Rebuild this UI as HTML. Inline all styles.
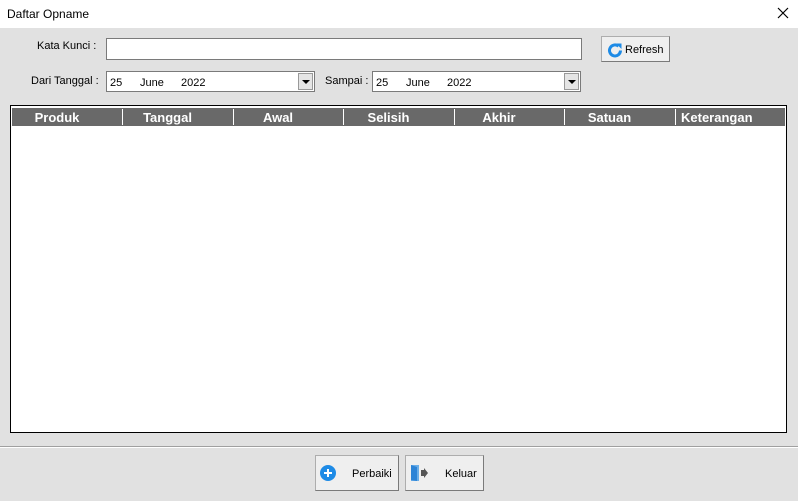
<!DOCTYPE html><html><head><style>
body{margin:0;width:798px;height:501px;background:#e1e1e1;font-family:"Liberation Sans",sans-serif;font-size:11px;position:relative;overflow:hidden}
.a{position:absolute}
.t{font-size:11px;color:#000}
.inp{background:#fff;border:1px solid #7a7a7a;box-sizing:border-box}
.hd{position:absolute;top:108px;height:18px;background:#696969;color:#fff;font-weight:bold;font-size:13px;line-height:19px;text-align:center;box-sizing:border-box;padding-right:20px}
.sep{position:absolute;top:109px;width:1px;height:16px;background:#fff}
.btn{position:absolute;background:#efefef;border:1px solid #adadad;border-right-color:#7a7a7a;border-bottom-color:#7a7a7a;box-sizing:border-box}
.dd{position:absolute;right:1px;top:1px;width:15px;height:17px;background:#e5e5e5;border:1px solid #999;box-sizing:border-box}
.dd:after{content:"";position:absolute;left:3px;top:6px;border-left:4px solid transparent;border-right:4px solid transparent;border-top:4px solid #000}
</style></head><body>
<div class="a" style="left:0;top:0;width:798px;height:28px;background:#fff"></div>
<div class="a t" style="left:7px;top:7px;font-size:12px">Daftar Opname</div>
<svg class="a" style="left:777px;top:7px" width="12" height="12"><path d="M1 1L11 11M11 1L1 11" stroke="#000" stroke-width="1.2"/></svg>
<div class="a t" style="left:37px;top:40px">Kata Kunci :</div>
<div class="a inp" style="left:106px;top:38px;width:476px;height:22px"></div>
<div class="btn" style="left:601px;top:36px;width:69px;height:26px"><svg class="a" style="left:5px;top:5px" width="16" height="16" viewBox="0 0 16 16"><path d="M11.5 4.2A5.5 5.5 0 1 0 13.5 8.5" fill="none" stroke="#1e8be6" stroke-width="3"/><path d="M9 1.5L14.5 1.5L14.5 7Z" fill="#1e8be6"/></svg><span class="a t" style="left:23px;top:7px">Refresh</span></div>
<div class="a t" style="left:31px;top:75px">Dari Tanggal :</div>
<div class="a inp" style="left:106px;top:71px;width:209px;height:21px"><span class="a t" style="left:3px;top:5px">25</span><span class="a t" style="left:33px;top:5px">June</span><span class="a t" style="left:74px;top:5px">2022</span><div class="dd"></div></div>
<div class="a t" style="left:325px;top:75px">Sampai :</div>
<div class="a inp" style="left:372px;top:71px;width:209px;height:21px"><span class="a t" style="left:3px;top:5px">25</span><span class="a t" style="left:33px;top:5px">June</span><span class="a t" style="left:74px;top:5px">2022</span><div class="dd"></div></div>
<div class="a" style="left:10px;top:105px;width:777px;height:328px;background:#fff;border:1px solid #000;box-sizing:border-box"></div>
<div class="hd" style="left:12px;width:110px">Produk</div>
<div class="hd" style="left:122px;width:111px">Tanggal</div>
<div class="hd" style="left:233px;width:110px">Awal</div>
<div class="hd" style="left:343px;width:111px">Selisih</div>
<div class="hd" style="left:454px;width:110px">Akhir</div>
<div class="hd" style="left:564px;width:111px">Satuan</div>
<div class="hd" style="left:675px;width:110px;padding-right:0;text-align:left;padding-left:6px">Keterangan</div>
<div class="sep" style="left:122px"></div><div class="sep" style="left:233px"></div><div class="sep" style="left:343px"></div><div class="sep" style="left:454px"></div><div class="sep" style="left:564px"></div><div class="sep" style="left:675px"></div>
<div class="a" style="left:0;top:446px;width:798px;height:1px;background:#a0a0a0"></div>
<div class="a" style="left:0;top:447px;width:798px;height:1px;background:#fff"></div>
<div class="btn" style="left:315px;top:455px;width:84px;height:36px"><svg class="a" style="left:4px;top:9px" width="16" height="16"><circle cx="8" cy="8" r="8" fill="#1e8be6"/><path d="M8 4v8M4 8h8" stroke="#fff" stroke-width="2"/></svg><span class="a t" style="left:36px;top:12px">Perbaiki</span></div>
<div class="btn" style="left:405px;top:455px;width:79px;height:36px"><svg class="a" style="left:4px;top:8px" width="18" height="18"><path d="M1 1h8v16h-8z" fill="#6aaee8"/><path d="M1 1l6 2v14l-6-1z" fill="#2d84d6"/><path d="M11 6h3v-2l4 5l-4 5v-2h-3z" fill="#555"/></svg><span class="a t" style="left:39px;top:12px">Keluar</span></div>
</body></html>
